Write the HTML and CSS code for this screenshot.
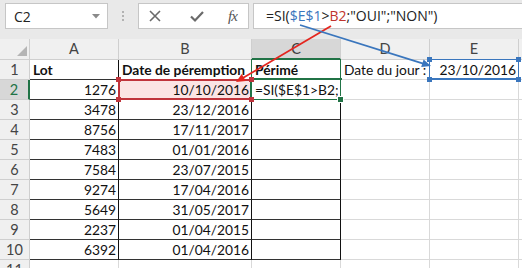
FILE: index.html
```html
<!DOCTYPE html>
<html lang="fr">
<head>
<meta charset="utf-8">
<title>Excel</title>
<link rel="stylesheet" href="styles.css">
</head>
<body>
<div class="app">
  <div class="fbar">
    <div class="namebox">
      <span class="nb-text">C2</span>
      <svg class="nb-arrow" width="8" height="5" viewBox="0 0 8 5"><polygon points="0,0 8,0 4,4.5" fill="#8a8a8a"/></svg>
    </div>
    <div class="sep"><i></i><i></i><i></i></div>
    <div class="btns">
      <svg class="ico" width="14" height="14" viewBox="0 0 14 14"><path d="M2 2 L12 12 M12 2 L2 12" stroke="#6a6a6a" stroke-width="1.6" fill="none"/></svg>
      <svg class="ico" width="16" height="14" viewBox="0 0 16 14"><path d="M2 7.5 L6 11.5 L14 3" stroke="#6a6a6a" stroke-width="2.2" fill="none"/></svg>
      <span class="fx">fx</span>
    </div>
    <div class="formula">=SI(<span class="ref-e">$E$1</span>&gt;<span class="ref-b">B2</span>;"OUI";"NON")</div>
  </div>

  <div class="sheet">
    <div class="hd corner"><span class="tri"></span></div>
    <div class="hd col">A</div>
    <div class="hd col">B</div>
    <div class="hd col sel">C</div>
    <div class="hd col">D</div>
    <div class="hd col">E</div>
    <div class="hd col">F</div>

    <div class="hd row">1</div>
    <div class="c t b">Lot</div>
    <div class="c t b">Date de péremption</div>
    <div class="c t b c1">Périmé</div>
    <div class="c">Date du jour :</div>
    <div class="c r e1">23/10/2016<i class="h tl"></i><i class="h tr"></i><i class="h bl"></i><i class="h br"></i></div>
    <div class="c"></div>

    <div class="hd row sel">2</div>
    <div class="c t r">1276</div>
    <div class="c t r b2">10/10/2016<i class="h tl"></i><i class="h tr"></i><i class="h bl"></i><i class="h br"></i></div>
    <div class="c t active"><span class="clip">=SI($E$1&gt;B2;"OUI";"NON")</span><i class="fill"></i></div>
    <div class="c"></div>
    <div class="c"></div>
    <div class="c"></div>

    <div class="hd row">3</div>
    <div class="c t r">3478</div>
    <div class="c t r">23/12/2016</div>
    <div class="c t"></div>
    <div class="c"></div><div class="c"></div><div class="c"></div>

    <div class="hd row">4</div>
    <div class="c t r">8756</div>
    <div class="c t r">17/11/2017</div>
    <div class="c t"></div>
    <div class="c"></div><div class="c"></div><div class="c"></div>

    <div class="hd row">5</div>
    <div class="c t r">7483</div>
    <div class="c t r">01/01/2016</div>
    <div class="c t"></div>
    <div class="c"></div><div class="c"></div><div class="c"></div>

    <div class="hd row">6</div>
    <div class="c t r">7584</div>
    <div class="c t r">23/07/2015</div>
    <div class="c t"></div>
    <div class="c"></div><div class="c"></div><div class="c"></div>

    <div class="hd row">7</div>
    <div class="c t r">9274</div>
    <div class="c t r">17/04/2016</div>
    <div class="c t"></div>
    <div class="c"></div><div class="c"></div><div class="c"></div>

    <div class="hd row">8</div>
    <div class="c t r">5649</div>
    <div class="c t r">31/05/2017</div>
    <div class="c t"></div>
    <div class="c"></div><div class="c"></div><div class="c"></div>

    <div class="hd row">9</div>
    <div class="c t r">2237</div>
    <div class="c t r">01/04/2015</div>
    <div class="c t"></div>
    <div class="c"></div><div class="c"></div><div class="c"></div>

    <div class="hd row">10</div>
    <div class="c t r">6392</div>
    <div class="c t r">01/04/2016</div>
    <div class="c t"></div>
    <div class="c"></div><div class="c"></div><div class="c"></div>

    <div class="hd row">11</div>
    <div class="c"></div><div class="c"></div><div class="c"></div>
    <div class="c"></div><div class="c"></div><div class="c"></div>
  </div>

  <svg class="arrows" width="522" height="268" viewBox="0 0 522 268">
    <line x1="331" y1="26" x2="242" y2="78.5" stroke="#e4261f" stroke-width="1.8"/>
    <polygon points="236,82 241.7,74 245.8,80.9" fill="#e4261f"/>
    <line x1="300" y1="25" x2="424" y2="63.8" stroke="#3a76bd" stroke-width="1.8"/>
    <polygon points="431,66 421.2,67.1 423.6,59.5" fill="#3a76bd"/>
  </svg>
</div>
</body>
</html>
```

FILE: styles.css
```css
html, body {
  margin: 0;
  padding: 0;
}
body {
  background: #ffffff;
  font-family: "Lato", "Liberation Sans", sans-serif;
  overflow: hidden;
}
.app {
  position: relative;
  width: 522px;
  height: 268px;
  overflow: hidden;
  background: #ffffff;
}

/* formula bar */
.fbar {
  height: 39px;
  box-sizing: border-box;
  background: #e9e9e9;
  display: flex;
  align-items: flex-start;
  padding-top: 3px;
}
.namebox {
  margin-left: 5px;
  width: 103px;
  height: 26px;
  box-sizing: border-box;
  background: #fff;
  border: 1px solid #c6c6c6;
  display: flex;
  align-items: center;
  justify-content: space-between;
  padding: 0 7px 0 8px;
}
.nb-text {
  font-family: "Open Sans", "Noto Sans", sans-serif;
  font-size: 14px;
  color: #222;
}
.sep {
  width: 30px;
  height: 26px;
  display: flex;
  flex-direction: column;
  align-items: center;
  justify-content: center;
  gap: 2px;
}
.sep i {
  width: 2px;
  height: 2px;
  background: #b2b2b2;
}
.btns {
  width: 111px;
  height: 26px;
  box-sizing: border-box;
  background: #fff;
  border: 1px solid #c6c6c6;
  display: flex;
  align-items: center;
  padding-left: 9px;
  gap: 27px;
}
.fx {
  font-family: "Liberation Serif", serif;
  font-style: italic;
  font-size: 15px;
  color: #555;
  letter-spacing: -1px;
  margin-left: -4px;
}
.formula {
  margin-left: 4px;
  flex: 1;
  height: 26px;
  box-sizing: border-box;
  background: #fff;
  border: 1px solid #c6c6c6;
  border-right: none;
  padding-left: 12px;
  font-family: "Open Sans", "Noto Sans", sans-serif;
  font-size: 14px;
  line-height: 24px;
  color: #222;
  white-space: nowrap;
}
.ref-e { color: #3a76bd; }
.ref-b { color: #c0342d; }

/* sheet */
.sheet {
  display: grid;
  grid-template-columns: 30px 89px 133px 89px 89px 89px 89px;
  grid-template-rows: 21px repeat(11, 20px);
  width: 608px;
}
.hd, .c {
  box-sizing: border-box;
  border-right: 1px solid #d9d9d9;
  border-bottom: 1px solid #d9d9d9;
  font-size: 13.8px;
  line-height: 19px;
  white-space: nowrap;
  overflow: hidden;
}
.hd {
  background: #f0f0f0;
  color: #444;
  text-align: center;
  border-color: #cfcfcf;
  font-size: 14.5px;
}
.hd.col { line-height: 20px; }
.hd.corner {
  position: relative;
}
.tri {
  position: absolute;
  right: 2px;
  bottom: 3px;
  width: 0;
  height: 0;
  border-left: 10px solid transparent;
  border-bottom: 10px solid #b5b5b5;
}
.hd.col.sel {
  background: #d7d7d7;
  color: #3c3c3c;
  border-bottom: 2px solid #217346;
}
.hd.row.sel {
  background: #d7d7d7;
  color: #217346;
  border-right: 2px solid #217346;
}
.c {
  background: #fff;
  color: #111;
  padding: 0 2px 0 3px;
  position: relative;
  overflow: visible;
}
.c.t {
  border-right-color: #111;
  border-bottom-color: #333;
  overflow: hidden;
}
.c.b { font-weight: 700; }
.c.r { text-align: right; }

/* C1 outline */
.c.c1 {
  overflow: visible;
}
.c.c1::before {
  content: "";
  position: absolute;
  left: -1px;
  top: -1px;
  right: -1px;
  bottom: -1px;
  border: 1px solid #217346;
  pointer-events: none;
}

/* active cell */
.c.active {
  overflow: visible;
}
.clip {
  display: block;
  overflow: hidden;
}
.c.active::before {
  content: "";
  position: absolute;
  left: -2px;
  top: -2px;
  right: -2px;
  bottom: -2px;
  border: 2px solid #217346;
  pointer-events: none;
}
.fill {
  position: absolute;
  right: -4px;
  bottom: -4px;
  width: 5px;
  height: 5px;
  background: #217346;
  border: 1px solid #fff;
  z-index: 3;
}

/* range finder B2 */
.c.b2 {
  background: #fbe4e4;
  overflow: visible;
}
.c.b2::before {
  content: "";
  position: absolute;
  left: -1px;
  top: -1px;
  right: -1px;
  bottom: -1px;
  border: 2px solid #c0343c;
  pointer-events: none;
}
.c.b2 .h { background: #c0343c; }

/* range finder E1 */
.c.e1::before {
  content: "";
  position: absolute;
  left: -1px;
  top: -1px;
  right: -1px;
  bottom: -1px;
  border: 1px solid #3a76bd;
  border-bottom-width: 2px;
  pointer-events: none;
}
.c.e1 .h { background: #3a76bd; }

.h {
  position: absolute;
  width: 5px;
  height: 5px;
  z-index: 2;
}
.h.tl { left: -3px; top: -3px; }
.h.tr { right: -3px; top: -3px; }
.h.bl { left: -3px; bottom: -3px; }
.h.br { right: -3px; bottom: -3px; }

.arrows {
  position: absolute;
  left: 0;
  top: 0;
  pointer-events: none;
}
```
